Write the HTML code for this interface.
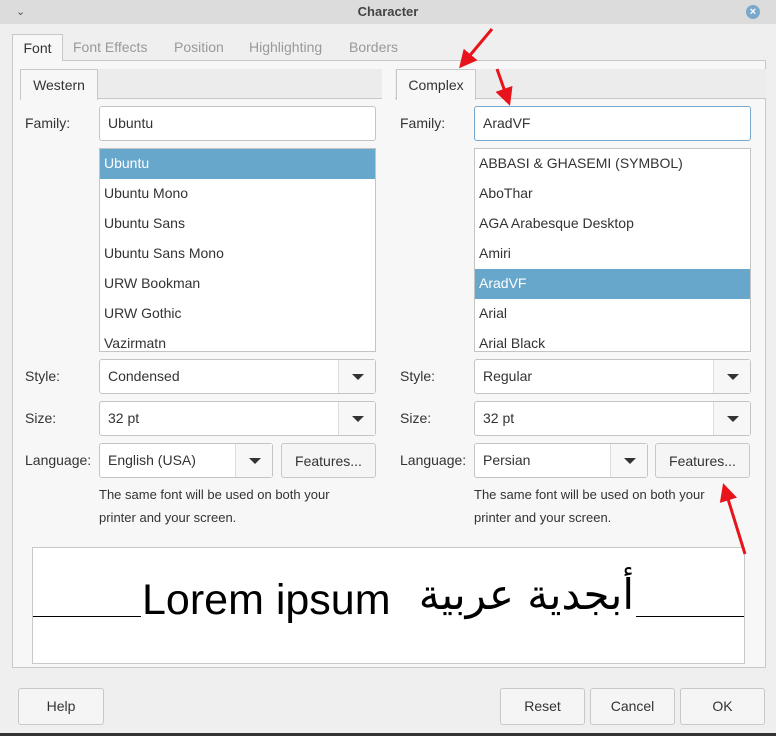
<!DOCTYPE html>
<html><head><meta charset="utf-8"><style>
*{box-sizing:border-box;margin:0;padding:0}
body{width:776px;height:736px;background:#efefef;font-family:"Liberation Sans","DejaVu Sans",sans-serif;font-size:14px;color:#333;position:relative;overflow:hidden}
.a{position:absolute}
.title{left:0;top:0;width:776px;height:24px;background:#dcdcdc;text-align:center;font-weight:bold;font-size:13px;line-height:24px;color:#444}
.inp{background:#fff;border:1px solid #c4c4c4;border-radius:3px;padding-left:8px;line-height:32px}
.lbl{font-size:14px;color:#333}
.list{background:#fff;border:1px solid #c4c4c4}
.list div{height:30px;line-height:28px;padding-left:4px}
.sel{background:#67a7cb;color:#fff}
.arr{position:absolute;right:0;top:0;bottom:0;width:37px;border-left:1px solid #ddd;background:#f7f7f7}
.arr:after{content:"";position:absolute;left:13px;top:14px;border-left:6px solid transparent;border-right:6px solid transparent;border-top:6px solid #333}
.btn{background:#f5f5f5;border:1px solid #c8c8c8;border-radius:3px;text-align:center;line-height:34px}
.note{font-size:13px;line-height:23px;color:#333}
</style></head><body>
<div class="a title">Character</div>
<div class="a" style="left:16px;top:5px;font-size:11px;color:#555">⌄</div>
<div class="a" style="left:746px;top:5px;width:14px;height:14px;border-radius:7px;background:#7aa8cc;color:#fff;font-size:11px;line-height:14px;text-align:center;font-weight:bold">×</div>
<div class="a" style="left:12px;top:60px;width:754px;height:608px;background:#f7f7f7;border:1px solid #c8c8c8"></div>
<div class="a" style="left:12px;top:34px;width:51px;height:27px;background:#f7f7f7;border:1px solid #c8c8c8;border-bottom:none;text-align:center;line-height:26px;color:#333">Font</div>
<div class="a" style="left:73px;top:39px;color:#999">Font Effects</div>
<div class="a" style="left:174px;top:39px;color:#999">Position</div>
<div class="a" style="left:249px;top:39px;color:#999">Highlighting</div>
<div class="a" style="left:349px;top:39px;color:#999">Borders</div>
<div class="a" style="left:20px;top:69px;width:362px;height:30px;background:#ececec;border-bottom:1px solid #c8c8c8"></div>
<div class="a" style="left:20px;top:69px;width:78px;height:31px;background:#f7f7f7;border:1px solid #c8c8c8;border-bottom:none;text-align:center;line-height:30px">Western</div>
<div class="a lbl" style="left:25px;top:115px">Family:</div>
<div class="a inp" style="left:99px;top:106px;width:277px;height:35px">Ubuntu</div>
<div class="a list" style="left:99px;top:148px;width:277px;height:204px;overflow:hidden">
<div class="sel">Ubuntu</div><div>Ubuntu Mono</div><div>Ubuntu Sans</div><div>Ubuntu Sans Mono</div><div>URW Bookman</div><div>URW Gothic</div><div>Vazirmatn</div></div>
<div class="a lbl" style="left:25px;top:368px">Style:</div>
<div class="a inp" style="left:99px;top:359px;width:277px;height:35px">Condensed<span class="arr"></span></div>
<div class="a lbl" style="left:25px;top:410px">Size:</div>
<div class="a inp" style="left:99px;top:401px;width:277px;height:35px">32 pt<span class="arr"></span></div>
<div class="a lbl" style="left:25px;top:452px">Language:</div>
<div class="a inp" style="left:99px;top:443px;width:174px;height:35px">English (USA)<span class="arr"></span></div>
<div class="a btn" style="left:281px;top:443px;width:95px;height:35px">Features...</div>
<div class="a note" style="left:99px;top:483px">The same font will be used on both your<br>printer and your screen.</div>
<div class="a" style="left:395px;top:69px;width:371px;height:30px;background:#ececec;border-bottom:1px solid #c8c8c8"></div>
<div class="a" style="left:396px;top:69px;width:80px;height:31px;background:#f7f7f7;border:1px solid #c8c8c8;border-bottom:none;text-align:center;line-height:30px">Complex</div>
<div class="a lbl" style="left:400px;top:115px">Family:</div>
<div class="a inp" style="left:474px;top:106px;width:277px;height:35px;border-color:#7aa8cc">AradVF</div>
<div class="a list" style="left:474px;top:148px;width:277px;height:204px;overflow:hidden">
<div>ABBASI &amp; GHASEMI (SYMBOL)</div><div>AboThar</div><div>AGA Arabesque Desktop</div><div>Amiri</div><div class="sel">AradVF</div><div>Arial</div><div>Arial Black</div></div>
<div class="a lbl" style="left:400px;top:368px">Style:</div>
<div class="a inp" style="left:474px;top:359px;width:277px;height:35px">Regular<span class="arr"></span></div>
<div class="a lbl" style="left:400px;top:410px">Size:</div>
<div class="a inp" style="left:474px;top:401px;width:277px;height:35px">32 pt<span class="arr"></span></div>
<div class="a lbl" style="left:400px;top:452px">Language:</div>
<div class="a inp" style="left:474px;top:443px;width:174px;height:35px">Persian<span class="arr"></span></div>
<div class="a btn" style="left:655px;top:443px;width:95px;height:35px">Features...</div>
<div class="a note" style="left:474px;top:483px">The same font will be used on both your<br>printer and your screen.</div>
<div class="a" style="left:32px;top:547px;width:713px;height:117px;background:#fff;border:1px solid #c8c8c8"></div>
<div class="a" style="left:33px;top:616px;width:108px;height:1px;background:#000"></div>
<div class="a" style="left:636px;top:616px;width:108px;height:1px;background:#000"></div>
<div class="a" style="left:142px;top:574px;font-size:43px;line-height:52px;color:#000;white-space:nowrap">Lorem ipsum</div>
<div class="a" style="left:400px;top:566px;width:234px;font-size:42px;line-height:58px;color:#000;font-family:'DejaVu Sans',sans-serif;direction:rtl;text-align:right;white-space:nowrap">أبجدية عربية</div>
<div class="a btn" style="left:18px;top:688px;width:86px;height:37px;line-height:35px">Help</div>
<div class="a btn" style="left:500px;top:688px;width:85px;height:37px;line-height:35px">Reset</div>
<div class="a btn" style="left:590px;top:688px;width:85px;height:37px;line-height:35px">Cancel</div>
<div class="a btn" style="left:680px;top:688px;width:85px;height:37px;line-height:35px">OK</div>
<div class="a" style="left:0;top:733px;width:776px;height:3px;background:#333"></div>
<svg class="a" style="left:0;top:0" width="776" height="736">
<defs><marker id="m" markerWidth="6" markerHeight="6" refX="5" refY="3" orient="auto"><path d="M0,0 L6,3 L0,6z" fill="#e8141b"/></marker></defs>
<g stroke="#e8141b" stroke-width="3" marker-end="url(#m)">
<line x1="492" y1="29" x2="461" y2="66"/>
<line x1="497" y1="69" x2="509" y2="103"/>
<line x1="745" y1="554" x2="724" y2="486"/>
</g></svg>
</body></html>
